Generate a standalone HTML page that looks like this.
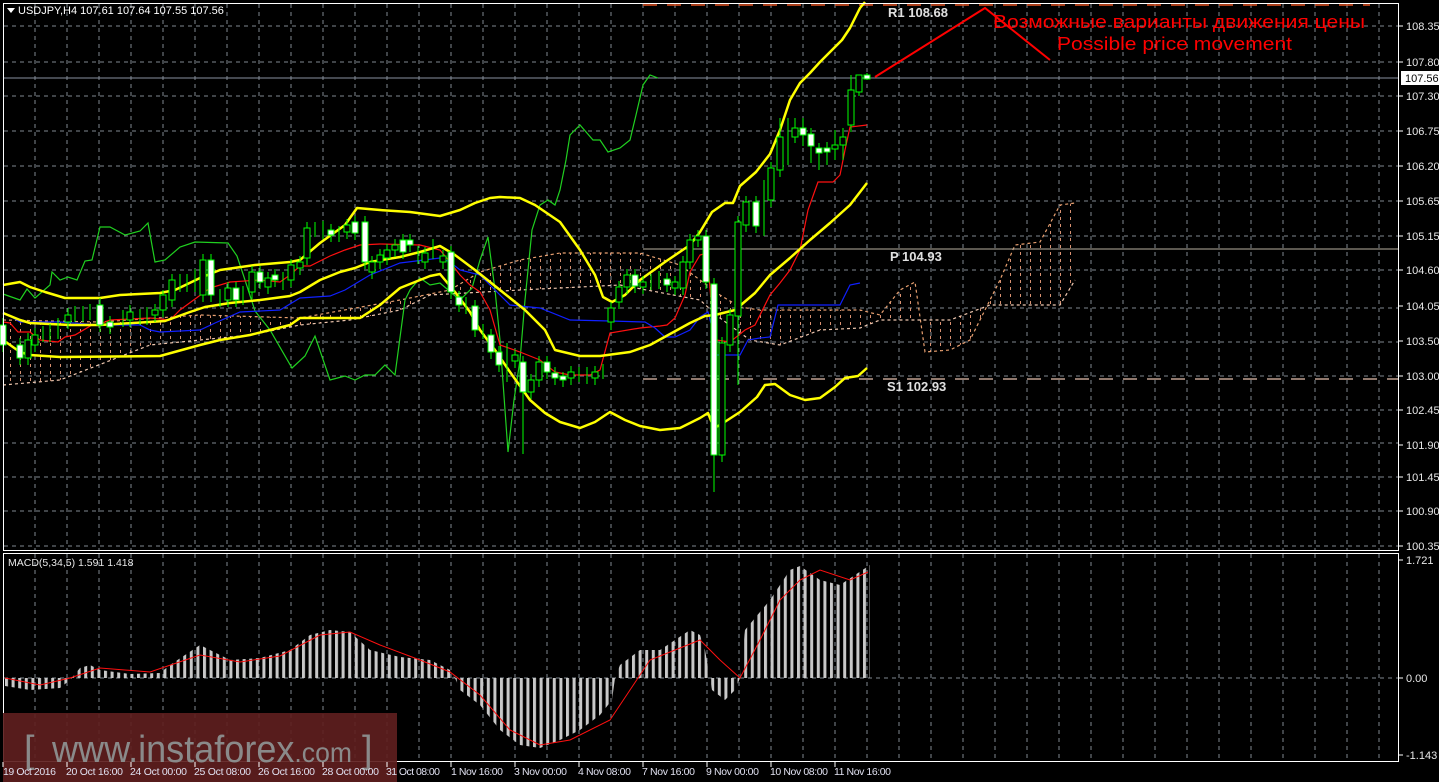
<!DOCTYPE html>
<html><head><meta charset="utf-8"><style>
html,body{margin:0;padding:0;background:#000;width:1439px;height:782px;overflow:hidden}
svg{display:block}
text{font-family:"Liberation Sans",sans-serif}
</style></head><body>
<svg width="1439" height="782" viewBox="0 0 1439 782" xmlns="http://www.w3.org/2000/svg">
<defs>
<pattern id="cl" width="10" height="7" patternUnits="userSpaceOnUse"><rect x="0" y="0" width="1" height="3" fill="#d89070"/></pattern>
<pattern id="hb" x="5" width="6.6" height="10" patternUnits="userSpaceOnUse"><rect x="0" y="0" width="3" height="10" fill="#c8c8c8"/></pattern>
</defs>
<rect width="1439" height="782" fill="#000"/>
<g stroke="#7f8790" stroke-width="1" stroke-dasharray="4,4">
<path d="M35 4V550M67 4V550M99 4V550M131 4V550M163 4V550M195 4V550M227 4V550M259 4V550M291 4V550M323 4V550M355 4V550M387 4V550M419 4V550M451 4V550M483 4V550M515 4V550M547 4V550M579 4V550M611 4V550M643 4V550M675 4V550M707 4V550M739 4V550M771 4V550M803 4V550M835 4V550M867 4V550M899 4V550M931 4V550M963 4V550M995 4V550M1027 4V550M1059 4V550M1091 4V550M1123 4V550M1155 4V550M1187 4V550M1219 4V550M1251 4V550M1283 4V550M1315 4V550M1347 4V550M1379 4V550"/>
<path d="M35 554V762M67 554V762M99 554V762M131 554V762M163 554V762M195 554V762M227 554V762M259 554V762M291 554V762M323 554V762M355 554V762M387 554V762M419 554V762M451 554V762M483 554V762M515 554V762M547 554V762M579 554V762M611 554V762M643 554V762M675 554V762M707 554V762M739 554V762M771 554V762M803 554V762M835 554V762M867 554V762M899 554V762M931 554V762M963 554V762M995 554V762M1027 554V762M1059 554V762M1091 554V762M1123 554V762M1155 554V762M1187 554V762M1219 554V762M1251 554V762M1283 554V762M1315 554V762M1347 554V762M1379 554V762"/>
<path d="M4 26H1399M4 62H1399M4 96H1399M4 131H1399M4 166H1399M4 201H1399M4 236H1399M4 270H1399M4 308H1399M4 342H1399M4 376H1399M4 410H1399M4 443H1399M4 477H1399M4 511H1399M4 546H1399M4 678H1399"/>
</g>
<polygon fill="url(#cl)" points="3,320 100,322 200,315 300,318 400,300 450,290 480,272 520,260 560,253 640,253 680,265 700,280 720,295 740,307 760,310 860,310 880,315 900,290 915,282 925,352 950,350 970,340 990,300 1000,280 1015,245 1040,242 1060,205 1075,203 1075,280 1060,305 990,305 950,320 880,320 860,328 820,330 780,345 750,340 720,318 700,300 620,285 520,290 430,295 400,310 350,320 300,325 250,335 150,345 60,380 3,385"/>
<g fill="none" stroke="#e8a070" stroke-width="1.2" stroke-dasharray="3,3">
<polyline points="3,320 100,322 200,315 300,318 400,300 450,290 480,272 520,260 560,253 640,253 680,265 700,280 720,295 740,307 760,310 860,310 880,315 900,290 915,282 925,352 950,350 970,340 990,300 1000,280 1015,245 1040,242 1060,205 1075,203"/>
<polyline stroke="#f0c8b0" points="3,385 60,380 150,345 250,335 300,325 350,320 400,310 430,295 520,290 620,285 700,300 720,318 750,340 780,345 820,330 860,328 880,320 950,320 990,305 1060,305 1075,280"/>
</g>
<line x1="643" y1="5" x2="1370" y2="5" stroke="#e05020" stroke-width="1.5" stroke-dasharray="14,10"/>
<line x1="643" y1="249" x2="1399" y2="249" stroke="#b8b0a0" stroke-width="1"/>
<line x1="643" y1="379" x2="1399" y2="379" stroke="#c0a090" stroke-width="1.5" stroke-dasharray="14,10"/>
<line x1="4" y1="78" x2="1399" y2="78" stroke="#8890a0" stroke-width="1"/>
<polyline fill="none" stroke="#20d020" stroke-width="1.2" points="3,294 20,300 27,289 35,298 50,285 52,272 60,280 68,277 77,280 85,261 92,260 100,227 110,227 125,235 140,231 148,223 155,262 165,260 180,247 195,242 228,243 237,256 244,277 255,311 270,330 292,368 305,356 315,336 330,380 345,376 355,380 365,375 375,375 385,365 395,375 405,300 410,290 420,278 430,285 440,283 460,300 472,288 480,260 488,237 495,290 500,340 508,452 514,400 520,360 525,300 532,230 540,205 548,200 555,205 560,190 566,160 570,135 580,125 593,140 600,140 608,152 620,148 630,140 636,115 643,85 650,75 658,78"/>
<polyline fill="none" stroke="#ff1010" stroke-width="1.2" points="3,322 10,323 18,332 30,332 40,340 58,342 65,337 75,335 92,325 100,324 110,320 150,318 170,320 180,310 210,288 230,282 260,280 280,282 290,275 300,266 310,266 330,256 345,250 360,245 380,244 420,245 440,250 450,262 460,275 470,285 480,292 490,310 500,345 520,352 540,360 555,372 570,375 590,375 600,370 610,333 640,328 660,326 667,325 675,318 685,295 690,272 700,255 707,253 711,300 716,340 730,342 745,330 755,325 770,295 780,283 790,270 800,250 808,210 818,182 833,182 840,175 845,150 850,127 867,125"/>
<polyline fill="none" stroke="#1020ff" stroke-width="1.2" points="3,312 20,322 60,322 100,325 140,325 150,330 160,332 200,330 215,323 240,312 280,310 300,298 330,296 345,290 370,275 400,263 440,258 450,262 460,270 480,275 490,285 510,305 540,308 570,320 610,321 645,322 655,328 665,337 675,337 690,330 700,317 708,312 714,335 716,355 740,355 748,340 760,338 770,337 778,305 840,305 850,285 860,283"/>
<g fill="none" stroke="#ffff00" stroke-width="2.5" stroke-linejoin="round">
<polyline points="3,285 20,282 30,287 45,292 65,298 100,298 120,295 160,293 175,290 200,278 220,270 255,265 290,262 300,260 320,243 345,225 357,208 380,210 410,212 440,216 460,210 475,203 490,198 500,197 520,198 535,205 560,222 580,250 595,275 603,297 612,302 625,295 640,280 665,262 690,245 700,232 712,212 725,203 733,203 740,186 756,172 770,154 780,130 790,100 800,83 810,73 820,62 830,52 842,40 850,28 860,8 865,2"/>
<polyline points="3,313 20,320 30,323 70,325 100,325 165,321 190,312 205,307 230,303 260,300 290,296 300,292 320,280 340,272 355,268 370,262 400,257 420,252 440,246 455,255 475,270 500,290 525,310 545,330 555,350 580,356 600,356 630,352 650,345 670,334 690,323 705,316 715,315 735,310 755,293 770,275 790,258 810,240 830,223 850,205 867,183"/>
<polyline points="3,340 20,352 30,355 60,357 160,356 200,345 220,340 250,335 270,330 290,325 300,318 315,318 360,318 380,305 400,288 415,282 430,276 440,274 455,292 470,312 480,330 495,350 510,372 530,400 545,413 560,422 580,428 595,422 610,412 625,420 640,426 660,430 680,428 700,418 708,413 714,428 720,425 740,412 757,397 765,385 775,384 790,395 805,400 820,398 835,387 845,378 858,376 867,368"/>
</g>
<path stroke="#00ff00" stroke-width="1" fill="none" d="M3 318V352M20 338V365M28 333V365M35 328V352M43 326V342M50 324V342M58 318V339M68 308V329M75 306V322M83 306V322M90 304V320M100 298V332M110 316V334M123 310V327M130 305V327M140 309V325M147 307V325M155 304V322M163 290V317M172 274V307M180 274V292M187 274V292M195 269V292M203 254V302M211 254V302M220 289V307M228 282V307M236 282V307M243 286V305M252 266V299M260 266V289M268 272V294M275 269V287M283 272V290M291 259V287M300 256V275M307 222V265M315 222V237M323 221V239M331 224V242M339 226V242M347 219V239M355 216V240M365 216V269M372 256V279M380 249V269M387 244V265M395 239V257M403 234V259M410 234V252M418 246V264M425 247V269M433 239V259M443 250V269M451 246V299M459 291V312M466 297V314M475 300V337M483 324V339M491 329V359M499 346V372M507 343V382M515 349V368M523 356V454M531 374V399M539 356V387M547 356V379M555 367V385M563 372V387M571 366V385M579 367V382M587 367V384M595 366V385M603 364V379M611 302V330M619 281V309M627 269V294M635 269V293M643 276V294M651 274V290M659 271V289M667 273V292M675 276V295M683 256V295M690 234V269M698 230V247M706 230V289M714 278V492M722 337V462M730 309V352M738 216V385M746 196V232M756 196V233M764 180V236M771 162V207M780 118V177M788 118V165M795 118V143M803 118V146M811 128V163M819 143V170M827 142V165M835 130V160M843 128V160M851 75V132M859 75V96M867 73V80"/>
<g stroke="#00ff00" stroke-width="1">
<g fill="#fff">
<rect x="0" y="325" width="6" height="20"/><rect x="17" y="345" width="6" height="13"/><rect x="97" y="305" width="6" height="20"/><rect x="107" y="322" width="6" height="5"/><rect x="208" y="260" width="6" height="35"/><rect x="233" y="288" width="6" height="12"/><rect x="257" y="272" width="6" height="10"/><rect x="272" y="275" width="6" height="5"/><rect x="328" y="230" width="6" height="5"/><rect x="352" y="222" width="6" height="11"/><rect x="362" y="222" width="6" height="40"/><rect x="400" y="240" width="6" height="12"/><rect x="407" y="240" width="6" height="5"/><rect x="448" y="252" width="6" height="40"/><rect x="456" y="297" width="6" height="8"/><rect x="472" y="306" width="6" height="24"/><rect x="488" y="335" width="6" height="17"/><rect x="496" y="352" width="6" height="13"/><rect x="520" y="362" width="6" height="30"/><rect x="544" y="362" width="6" height="10"/><rect x="552" y="373" width="6" height="5"/><rect x="560" y="376" width="6" height="4"/><rect x="632" y="275" width="6" height="11"/><rect x="664" y="279" width="6" height="6"/><rect x="703" y="236" width="6" height="46"/><rect x="711" y="284" width="6" height="171"/><rect x="753" y="202" width="6" height="24"/><rect x="800" y="128" width="6" height="7"/><rect x="808" y="134" width="6" height="12"/><rect x="816" y="148" width="6" height="5"/><rect x="824" y="148" width="6" height="4"/><rect x="864" y="75" width="6" height="4"/>
</g>
<g fill="#000">
<rect x="25" y="340" width="6" height="18"/><rect x="32" y="335" width="6" height="10"/><rect x="65" y="315" width="6" height="7"/><rect x="127" y="312" width="6" height="8"/><rect x="152" y="310" width="6" height="5"/><rect x="160" y="295" width="6" height="15"/><rect x="169" y="280" width="6" height="20"/><rect x="200" y="260" width="6" height="35"/><rect x="225" y="288" width="6" height="12"/><rect x="249" y="272" width="6" height="20"/><rect x="265" y="278" width="6" height="9"/><rect x="288" y="265" width="6" height="15"/><rect x="297" y="262" width="6" height="6"/><rect x="304" y="228" width="6" height="30"/><rect x="344" y="225" width="6" height="7"/><rect x="369" y="262" width="6" height="10"/><rect x="377" y="255" width="6" height="7"/><rect x="384" y="250" width="6" height="8"/><rect x="392" y="245" width="6" height="5"/><rect x="422" y="253" width="6" height="9"/><rect x="440" y="256" width="6" height="6"/><rect x="512" y="355" width="6" height="6"/><rect x="528" y="380" width="6" height="12"/><rect x="536" y="362" width="6" height="18"/><rect x="568" y="372" width="6" height="6"/><rect x="592" y="372" width="6" height="6"/><rect x="608" y="308" width="6" height="14"/><rect x="616" y="287" width="6" height="15"/><rect x="624" y="275" width="6" height="12"/><rect x="640" y="282" width="6" height="5"/><rect x="672" y="282" width="6" height="6"/><rect x="680" y="262" width="6" height="26"/><rect x="687" y="240" width="6" height="22"/><rect x="695" y="236" width="6" height="4"/><rect x="719" y="343" width="6" height="112"/><rect x="727" y="315" width="6" height="30"/><rect x="735" y="222" width="6" height="94"/><rect x="743" y="202" width="6" height="23"/><rect x="768" y="168" width="6" height="32"/><rect x="777" y="137" width="6" height="33"/><rect x="792" y="128" width="6" height="9"/><rect x="832" y="145" width="6" height="4"/><rect x="840" y="137" width="6" height="8"/><rect x="848" y="90" width="6" height="35"/><rect x="856" y="75" width="6" height="17"/>
</g>
</g>
<polyline fill="none" stroke="#ff0000" stroke-width="2" points="875,77 985,8 1050,60"/>
<text x="993" y="28" font-size="18.5" fill="#ff0000" textLength="372" lengthAdjust="spacingAndGlyphs">Возможные варианты движения цены</text>
<text x="1057" y="50" font-size="18.5" fill="#ff0000" textLength="235" lengthAdjust="spacingAndGlyphs">Possible price movement</text>
<g font-family="Liberation Mono,monospace" font-size="13" fill="#e0e0e0" font-weight="bold">
<text x="888" y="17">R1 108.68</text>
<text x="890" y="261">P 104.93</text>
<text x="887" y="391">S1 102.93</text>
</g>
<polygon fill="url(#hb)" points="5,678 5,686 30,690 60,688 70,680 80,668 90,665 100,670 130,674 160,673 170,665 185,655 200,645 210,650 230,660 260,658 290,650 310,635 330,630 350,632 370,650 400,657 430,660 450,670 455,678 460,690 480,705 500,730 520,745 540,748 560,740 580,730 600,715 612,700 615,678 620,665 640,650 660,650 690,630 700,635 705,650 710,678 712,690 725,700 735,690 740,678 745,630 770,600 790,570 800,566 820,580 840,585 855,575 870,565 870,678"/>
<polyline fill="none" stroke="#ff1010" stroke-width="1" points="5,678 40,685 70,678 100,668 150,672 200,655 240,662 280,656 320,635 350,632 380,645 420,660 450,672 480,695 510,730 540,745 570,740 610,720 630,690 650,660 700,640 720,660 740,678 760,640 780,600 800,580 820,570 850,580 868,572"/>
<text x="8" y="566" font-size="10.5" fill="#e8e8e8">MACD(5,34,5) 1.591 1.418</text>
<rect x="3.5" y="3.5" width="1395" height="547" fill="none" stroke="#fff" stroke-width="1"/>
<rect x="3.5" y="553.5" width="1395" height="208" fill="none" stroke="#fff" stroke-width="1"/>
<g font-size="11" fill="#e8e8e8">
<path stroke="#fff" d="M1399 26h4M1399 62h4M1399 96h4M1399 131h4M1399 166h4M1399 201h4M1399 236h4M1399 270h4M1399 306h4M1399 341h4M1399 376h4M1399 410h4M1399 445h4M1399 477h4M1399 511h4M1399 546h4M1399 560h4M1399 678h4M1399 755h4"/>
<text x="1406" y="30">108.35</text><text x="1406" y="66">107.80</text><text x="1406" y="100">107.30</text><text x="1406" y="135">106.75</text><text x="1406" y="170">106.20</text><text x="1406" y="205">105.65</text><text x="1406" y="240">105.15</text><text x="1406" y="274">104.60</text><text x="1406" y="310">104.05</text><text x="1406" y="345">103.50</text><text x="1406" y="380">103.00</text><text x="1406" y="414">102.45</text><text x="1406" y="449">101.90</text><text x="1406" y="481">101.45</text><text x="1406" y="515">100.90</text><text x="1406" y="550">100.35</text>
<text x="1406" y="564">1.721</text><text x="1406" y="682">0.00</text><text x="1406" y="759">-1.143</text>
</g>
<rect x="1401" y="71" width="38" height="14" fill="#fff"/>
<text x="1405" y="82" font-size="11" fill="#000">107.56</text>
<rect x="3" y="713" width="394" height="69" fill="#5e1e1e" fill-opacity="0.92"/>
<text x="24" y="762" font-size="38" fill="#8a8a8a">[</text>
<text x="52" y="762" font-size="38" fill="#8a8a8a" textLength="300" lengthAdjust="spacingAndGlyphs">www.instaforex<tspan font-size="28">.com</tspan></text>
<text x="362" y="762" font-size="38" fill="#8a8a8a">]</text>
<path stroke="#fff" d="M3 762v5M67 762v5M131 762v5M195 762v5M259 762v5M323 762v5M387 762v5M451 762v5M515 762v5M579 762v5M643 762v5M707 762v5M771 762v5M835 762v5"/>
<g font-size="10.5" fill="#e0e0f0">
<text x="3" y="775" textLength="53">19 Oct 2016</text><text x="66" y="775" textLength="57">20 Oct 16:00</text><text x="130" y="775" textLength="57">24 Oct 00:00</text><text x="194" y="775" textLength="57">25 Oct 08:00</text><text x="258" y="775" textLength="57">26 Oct 16:00</text><text x="322" y="775" textLength="57">28 Oct 00:00</text><text x="386" y="775" textLength="54">31 Oct 08:00</text><text x="451" y="775" textLength="52">1 Nov 16:00</text><text x="514" y="775" textLength="53">3 Nov 00:00</text><text x="578" y="775" textLength="53">4 Nov 08:00</text><text x="642" y="775" textLength="53">7 Nov 16:00</text><text x="706" y="775" textLength="53">9 Nov 00:00</text><text x="770" y="775" textLength="58">10 Nov 08:00</text><text x="834" y="775" textLength="57">11 Nov 16:00</text>
</g>
<path d="M7 8h8l-4 5z" fill="#fff"/>
<text x="18" y="14" font-size="11" fill="#fff">USDJPY,H4  107.61 107.64 107.55 107.56</text>
</svg>
</body></html>
